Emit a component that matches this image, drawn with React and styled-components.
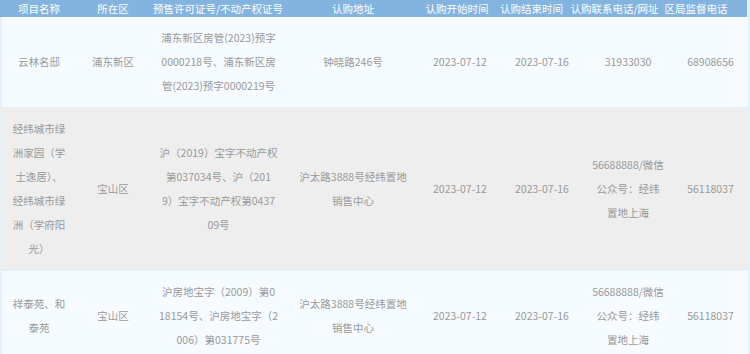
import React from "react";
import styled, { createGlobalStyle } from "styled-components";

const Global = createGlobalStyle`
  html, body { margin: 0; padding: 0; background: #e4f1fb; }
  body { font-family: "Noto Sans CJK SC", "Noto Sans", sans-serif; }
`;

const Page = styled.div`
  width: 750px;
  height: 354px;
  overflow: hidden;
  background: #e4f1fb;
`;

const HeaderBar = styled.div`
  width: 747px;
  height: 17px;
  background: #83b4df;
  display: grid;
  grid-template-columns: 2px 74px 74px 136px 134px 74px 75px 91px 72px 15px;
  align-items: center;
`;

const HeadCell = styled.div`
  color: #ffffff;
  font-size: 10.5px;
  line-height: 17px;
  text-align: center;
  white-space: nowrap;
  min-width: 0;
`;

const Body = styled.div`
  display: flex;
  flex-direction: column;
  gap: 1px;
  padding: 0 2px;
`;

const Row = styled.div`
  width: 746px;
  display: grid;
  grid-template-columns: 74px 74px 137px 132px 82px 82px 90px 75px;
  align-items: center;
  background: ${(p) => (p.$alt ? "#eeeeee" : "#f6fbff")};
  padding: 9px 0;
`;

const Cell = styled.div`
  color: #999999;
  font-size: 10.5px;
  line-height: 24px;
  text-align: center;
  white-space: nowrap;
  min-width: 0;
`;

const headers = [
  "",
  "项目名称",
  "所在区",
  "预售许可证号/不动产权证号",
  "认购地址",
  "认购开始时间",
  "认购结束时间",
  "认购联系电话/网址",
  "区局监督电话",
  "",
];

const rows = [
  [
    ["云林名邸"],
    ["浦东新区"],
    ["浦东新区房管(2023)预字", "0000218号、浦东新区房", "管(2023)预字0000219号"],
    ["钟晓路246号"],
    ["2023-07-12"],
    ["2023-07-16"],
    ["31933030"],
    ["68908656"],
  ],
  [
    ["经纬城市绿", "洲家园（学", "士逸居）、", "经纬城市绿", "洲（学府阳", "光）"],
    ["宝山区"],
    ["沪（2019）宝字不动产权", "第037034号、沪（201", "9）宝字不动产权第0437", "09号"],
    ["沪太路3888号经纬置地", "销售中心"],
    ["2023-07-12"],
    ["2023-07-16"],
    ["56688888/微信", "公众号：经纬", "置地上海"],
    ["56118037"],
  ],
  [
    ["祥泰苑、和", "泰苑"],
    ["宝山区"],
    ["沪房地宝字（2009）第0", "18154号、沪房地宝字（2", "006）第031775号"],
    ["沪太路3888号经纬置地", "销售中心"],
    ["2023-07-12"],
    ["2023-07-16"],
    ["56688888/微信", "公众号：经纬", "置地上海"],
    ["56118037"],
  ],
];

function Lines({ lines }) {
  return lines.map((l, i) => (
    <React.Fragment key={i}>
      {i > 0 && <br />}
      {l}
    </React.Fragment>
  ));
}

export default function App() {
  return (
    <Page>
      <Global />
      <HeaderBar>
        {headers.map((h, i) => (
          <HeadCell key={i}>{h}</HeadCell>
        ))}
      </HeaderBar>
      <Body>
        {rows.map((r, i) => (
          <Row key={i} $alt={i % 2 === 1}>
            {r.map((c, j) => (
              <Cell key={j}>
                <Lines lines={c} />
              </Cell>
            ))}
          </Row>
        ))}
      </Body>
    </Page>
  );
}
